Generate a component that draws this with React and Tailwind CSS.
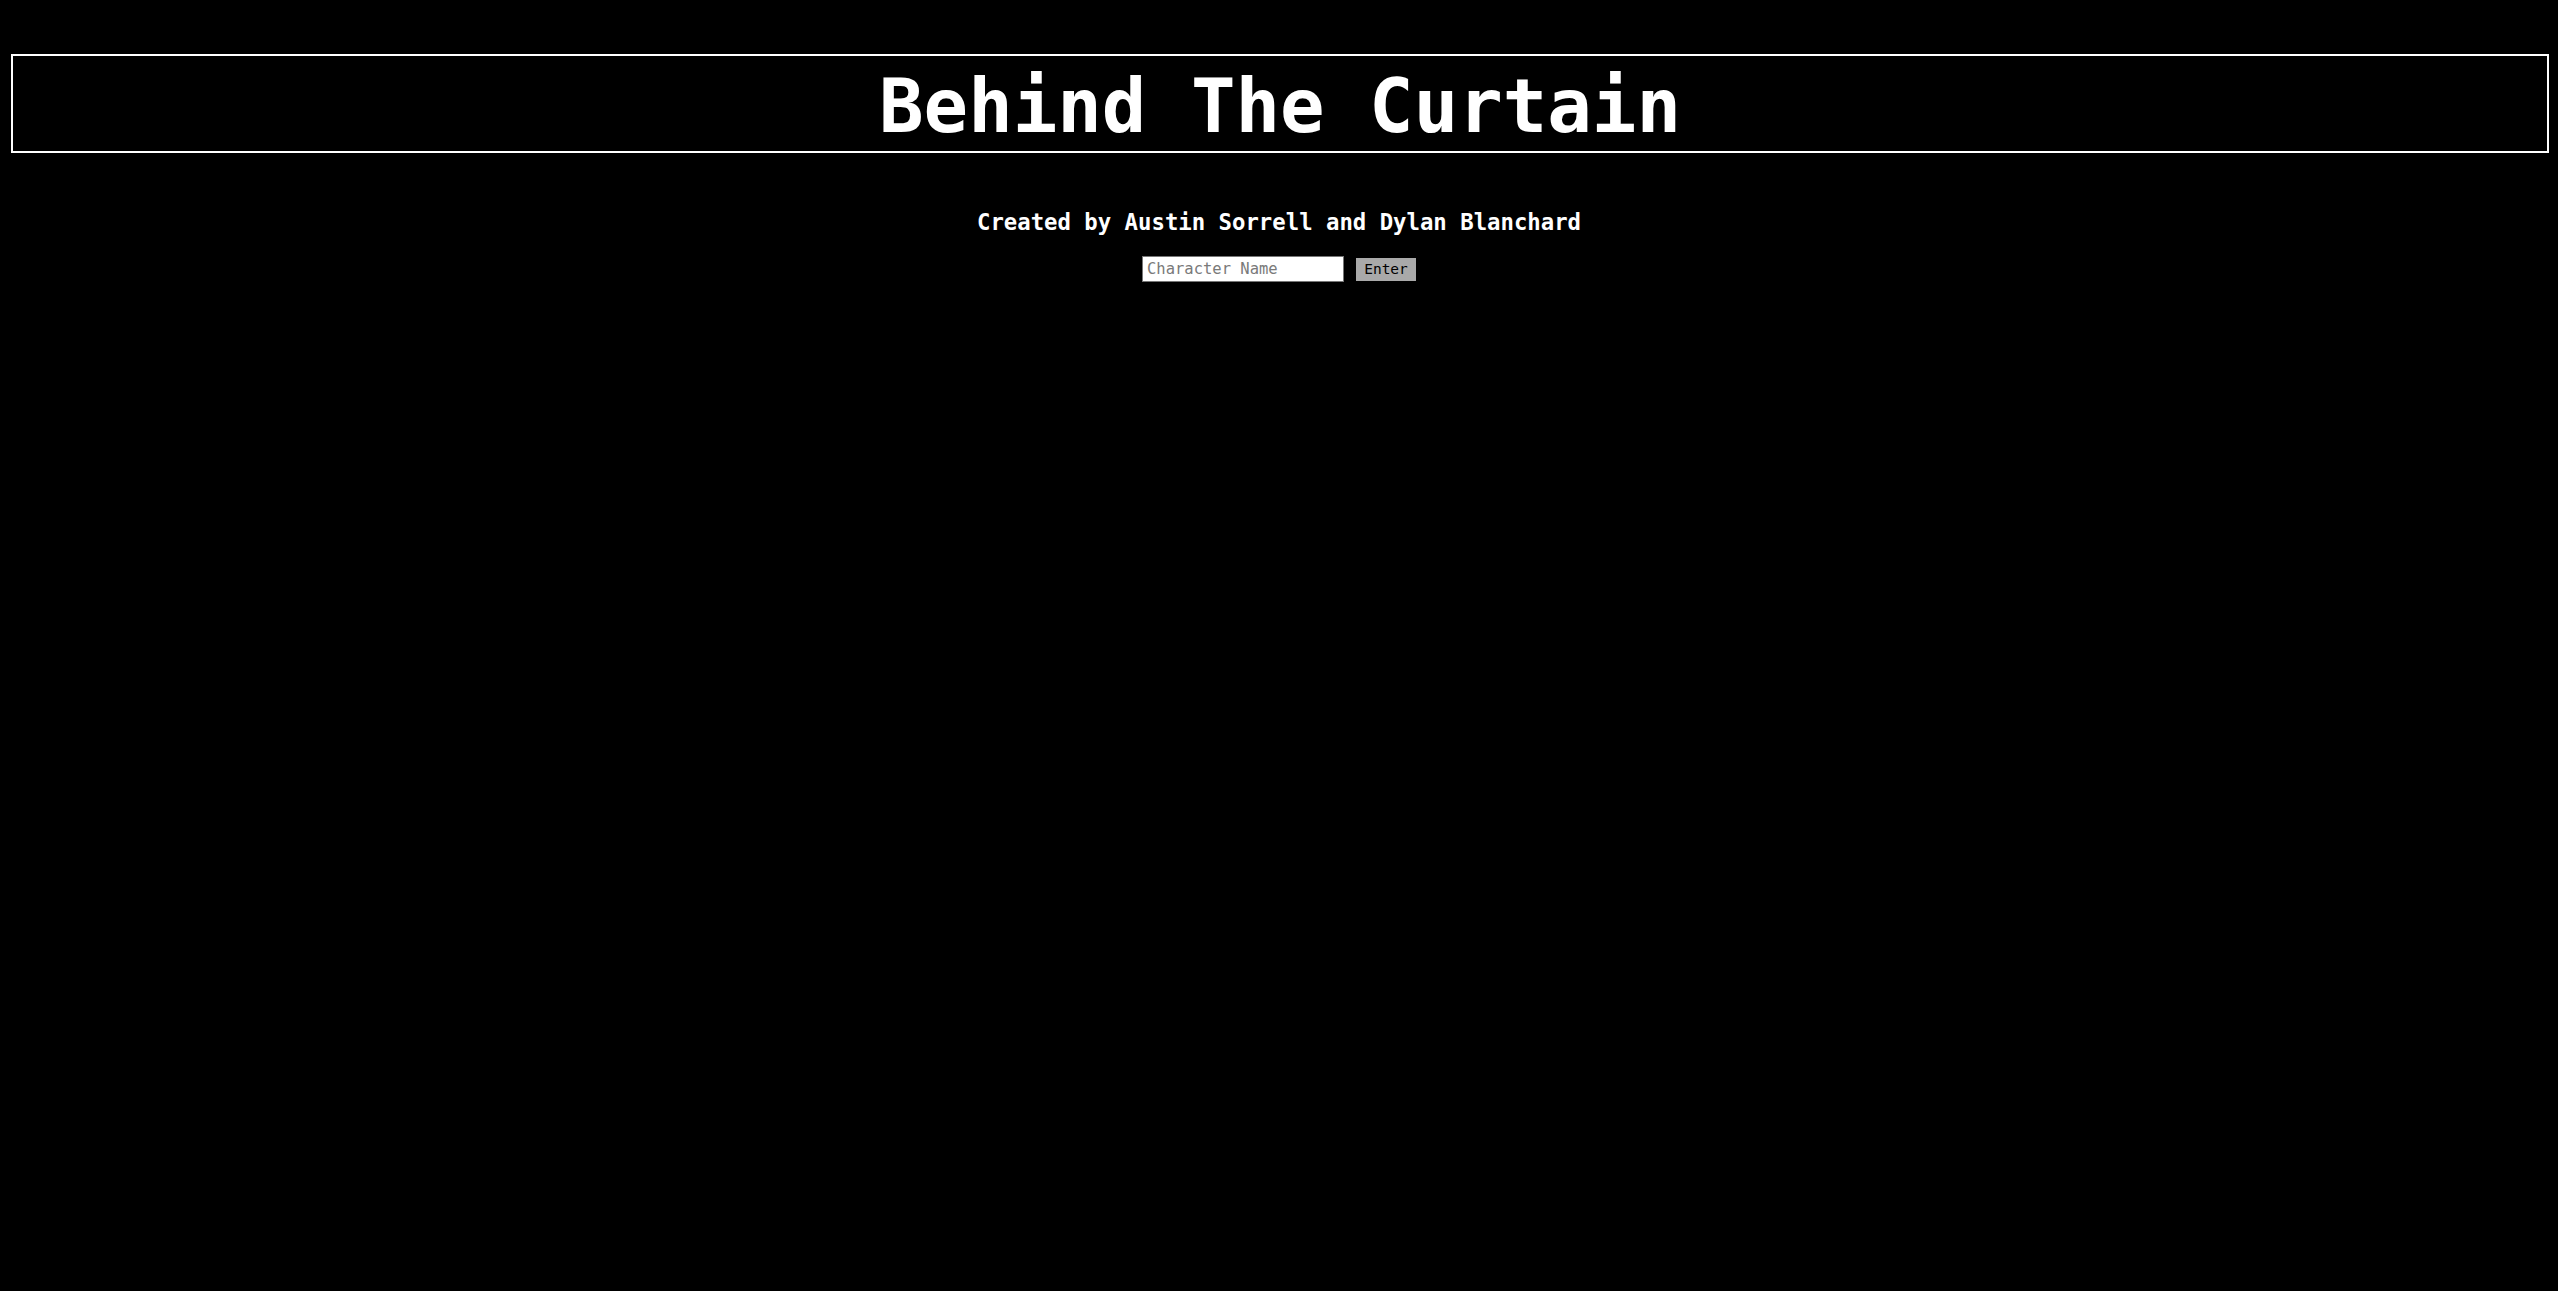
export default function App() {
  const mono = { fontFamily: '"DejaVu Sans Mono", "Liberation Mono", monospace' };
  return (
    <div className="min-h-screen w-full bg-black text-white" style={mono}>
      <div className="pt-[54px] pl-[11px] pr-[9px]">
        <div className="h-[99px] border-2 border-white pt-[10px] text-center">
          <h1 className="text-[74px] font-bold leading-[81px] text-white">Behind The Curtain</h1>
        </div>
      </div>
      <div className="mt-[56px] text-center">
        <h3 className="text-[22.3px] font-bold leading-[26px] text-white">Created by Austin Sorrell and Dylan Blanchard</h3>
      </div>
      <div className="mt-[21px] flex items-center justify-center gap-[12px]">
        <input
          type="text"
          placeholder="Character Name"
          className="h-[26px] w-[202px] border border-[#767676] bg-white px-[4px] text-[15.5px] text-black outline-none placeholder:text-[#7a7a7a]"
          style={mono}
        />
        <button
          className="h-[23px] w-[60px] bg-[#a9a9a9] text-[14.5px] leading-[23px] text-black"
          style={mono}
        >
          Enter
        </button>
      </div>
    </div>
  );
}
